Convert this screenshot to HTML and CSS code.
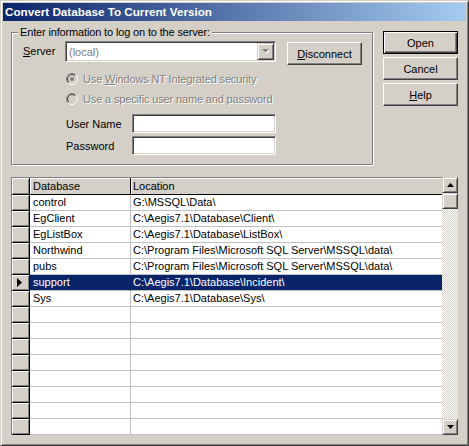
FILE: index.html
```html
<!DOCTYPE html>
<html>
<head>
<meta charset="utf-8">
<link rel="stylesheet" href="styles.css">
</head>
<body>
<div class="window">
  <div class="titlebar">Convert Database To Current Version</div>
  <div class="body">
    <div class="top">
      <fieldset class="group">
        <legend>Enter information to log on to the server:</legend>
        <div class="row-server">
          <span class="lbl-server"><u>S</u>erver</span>
          <div class="combo">
            <span class="combo-text">(local)</span>
            <span class="combo-btn">
              <svg width="7" height="5" viewBox="0 0 7 5"><polygon points="1,1 8,1 4.5,4.5" fill="#fff"/><polygon points="0,0 7,0 3.5,3.5" fill="#808080"/></svg>
            </span>
          </div>
          <div class="btn btn-disconnect"><span><u>D</u>isconnect</span></div>
        </div>
        <div class="radio-row r1">
          <svg class="radio" width="12" height="12" viewBox="0 0 12 12">
            <defs>
              <linearGradient id="go" x1="0" y1="0" x2="1" y2="1"><stop offset="0.5" stop-color="#808080"/><stop offset="0.5" stop-color="#ffffff"/></linearGradient>
              <linearGradient id="gi" x1="0" y1="0" x2="1" y2="1"><stop offset="0.5" stop-color="#404040"/><stop offset="0.5" stop-color="#d4d0c8"/></linearGradient>
            </defs>
            <circle cx="6" cy="6" r="5.5" fill="none" stroke="url(#go)" stroke-width="1"/>
            <circle cx="6" cy="6" r="4.5" fill="#d4d0c8" stroke="url(#gi)" stroke-width="1"/>
            <circle cx="6" cy="6" r="2" fill="#808080"/>
          </svg>
          <span class="disabled">Use <u>W</u>indows NT Integrated security</span>
        </div>
        <div class="radio-row r2">
          <svg class="radio" width="12" height="12" viewBox="0 0 12 12">
            <circle cx="6" cy="6" r="5.5" fill="none" stroke="url(#go)" stroke-width="1"/>
            <circle cx="6" cy="6" r="4.5" fill="#d4d0c8" stroke="url(#gi)" stroke-width="1"/>
          </svg>
          <span class="disabled">Use a specific user name and password</span>
        </div>
        <div class="field-row f1">
          <span class="field-lbl">User Name</span>
          <div class="edit"></div>
        </div>
        <div class="field-row f2">
          <span class="field-lbl">Password</span>
          <div class="edit"></div>
        </div>
      </fieldset>
      <div class="btns">
        <div class="btn btn-default"><span>Open</span></div>
        <div class="btn"><span>Cancel</span></div>
        <div class="btn"><span><u>H</u>elp</span></div>
      </div>
    </div>
    <div class="grid">
      <div class="table">
        <div class="sel hdr"></div>
        <div class="hcell">Database</div>
        <div class="hcell loc">Location</div>

        <div class="sel"></div><div class="cell db">control</div><div class="cell loc">G:\MSSQL\Data\</div>
        <div class="sel"></div><div class="cell db">EgClient</div><div class="cell loc">C:\Aegis7.1\Database\Client\</div>
        <div class="sel"></div><div class="cell db">EgListBox</div><div class="cell loc">C:\Aegis7.1\Database\ListBox\</div>
        <div class="sel"></div><div class="cell db">Northwind</div><div class="cell loc">C:\Program Files\Microsoft SQL Server\MSSQL\data\</div>
        <div class="sel"></div><div class="cell db">pubs</div><div class="cell loc">C:\Program Files\Microsoft SQL Server\MSSQL\data\</div>
        <div class="sel cur"><svg width="6" height="9" viewBox="0 0 6 9"><polygon points="0,0 5,4.5 0,9" fill="#000"/></svg></div><div class="cell db selrow">support</div><div class="cell loc selrow">C:\Aegis7.1\Database\Incident\</div>
        <div class="sel"></div><div class="cell db">Sys</div><div class="cell loc">C:\Aegis7.1\Database\Sys\</div>

        <div class="sel"></div><div class="cell db"></div><div class="cell loc"></div>
        <div class="sel"></div><div class="cell db"></div><div class="cell loc"></div>
        <div class="sel"></div><div class="cell db"></div><div class="cell loc"></div>
        <div class="sel"></div><div class="cell db"></div><div class="cell loc"></div>
        <div class="sel"></div><div class="cell db"></div><div class="cell loc"></div>
        <div class="sel"></div><div class="cell db"></div><div class="cell loc"></div>
        <div class="sel"></div><div class="cell db"></div><div class="cell loc"></div>
        <div class="sel"></div><div class="cell db"></div><div class="cell loc"></div>
      </div>
      <div class="vscroll">
        <div class="sbtn"><svg width="7" height="4" viewBox="0 0 7 4"><polygon points="3.5,0 7,4 0,4" fill="#000"/></svg></div>
        <div class="sbtn thumb"></div>
        <div class="track"></div>
        <div class="sbtn"><svg width="7" height="4" viewBox="0 0 7 4"><polygon points="0,0 7,0 3.5,4" fill="#000"/></svg></div>
      </div>
    </div>
  </div>
</div>
</body>
</html>
```
FILE: styles.css
```css
html, body {
  margin: 0;
  padding: 0;
  background: #d4d0c8;
}
body {
  font-family: "Liberation Sans", Arial, sans-serif;
  font-size: 11px;
  color: #000;
}
.window {
  width: 469px;
  height: 446px;
  box-sizing: border-box;
  background: #d4d0c8;
  border: 1px solid;
  border-color: #d4d0c8 #404040 #404040 #d4d0c8;
  box-shadow: inset 1px 1px #fff, inset -1px -1px #808080;
  padding: 2px;
  overflow: hidden;
}
.titlebar {
  height: 18px;
  line-height: 18px;
  padding-left: 2px;
  background: linear-gradient(to right, #0a246a, #a6caf0);
  color: #fff;
  font-weight: bold;
  font-size: 11.7px;
  white-space: nowrap;
}
.body {
  padding-left: 8px;
}
.top {
  display: flex;
  align-items: flex-start;
  margin-top: 5px;
}
.group {
  width: 362px;
  box-sizing: border-box;
  margin: 0;
  padding: 2px 0 9px 0;
  border: 1px solid #808080;
  box-shadow: inset 1px 1px #fff, 1px 1px #fff;
  min-width: 0;
}
.group legend {
  margin-left: 6px;
  padding: 0 2px;
  line-height: 13px;
  background: #d4d0c8;
  letter-spacing: -0.15px;
}
.row-server {
  display: flex;
  align-items: flex-start;
  padding-left: 11px;
  height: 23px;
}
.lbl-server {
  width: 42px;
  line-height: 21px;
}
.combo {
  width: 211px;
  height: 21px;
  box-sizing: border-box;
  border: 1px solid;
  border-color: #808080 #fff #fff #808080;
  box-shadow: inset 1px 1px #404040, inset -1px -1px #d4d0c8;
  background: #fff;
  display: flex;
  align-items: center;
  padding: 1px;
}
.combo-text {
  flex: 1;
  color: #808080;
  padding-left: 2px;
}
.combo-btn {
  width: 17px;
  height: 17px;
  box-sizing: border-box;
  border: 1px solid;
  border-color: #d4d0c8 #404040 #404040 #d4d0c8;
  box-shadow: inset 1px 1px #fff, inset -1px -1px #808080;
  background: #d4d0c8;
  display: flex;
  align-items: center;
  justify-content: center;
}
.btn {
  width: 75px;
  height: 23px;
  box-sizing: border-box;
  border: 1px solid;
  border-color: #fff #404040 #404040 #fff;
  box-shadow: inset -1px -1px #808080;
  background: #d4d0c8;
  display: flex;
  align-items: center;
  justify-content: center;
  font-size: 11px;
}
.btn-disconnect {
  margin-left: 11px;
  margin-top: 1px;
}
.btn-default {
  border: 1px solid #000;
  box-shadow: inset 1px 1px #fff, inset -1px -1px #404040, inset -2px -2px #808080;
}
.btns {
  margin-left: 10px;
  margin-top: 5px;
  display: flex;
  flex-direction: column;
  gap: 3px;
}
.radio-row {
  display: flex;
  align-items: center;
  height: 14px;
  padding-left: 54px;
}
.radio-row.r1 { margin-top: 8px; }
.radio-row.r2 { margin-top: 6px; }
.radio {
  margin-right: 5px;
  flex: none;
}
.disabled {
  color: #808080;
  text-shadow: 1px 1px 0 #fff;
  letter-spacing: -0.15px;
}
.field-row {
  display: flex;
  align-items: center;
  padding-left: 54px;
  height: 19px;
}
.field-row.f1 { margin-top: 8px; }
.field-row.f2 { margin-top: 3px; }
.field-lbl {
  width: 66px;
}
.edit {
  width: 144px;
  height: 19px;
  box-sizing: border-box;
  border: 1px solid;
  border-color: #808080 #fff #fff #808080;
  box-shadow: inset 1px 1px #404040, inset -1px -1px #d4d0c8;
  background: #fff;
}
.grid {
  margin-top: 12px;
  width: 447px;
  display: flex;
  border-left: 1px solid #808080;
}
.table {
  width: 430px;
  border-top: 1px solid #808080;
  display: grid;
  grid-template-columns: 18px 101px 311px;
  grid-template-rows: 17px repeat(15, 16px);
  background: #fff;
}
.sel {
  background: #d4d0c8;
  box-sizing: border-box;
  border-right: 1px solid #000;
  border-bottom: 1px solid #000;
  box-shadow: inset 1px 1px #fff, inset -1px -1px #808080;
  display: flex;
  align-items: center;
  padding-left: 5px;
}
.hcell {
  background: #d4d0c8;
  box-sizing: border-box;
  border-right: 1px solid #000;
  border-bottom: 1px solid #000;
  box-shadow: inset 1px 1px #fff;
  padding-left: 3px;
  line-height: 16px;
  white-space: nowrap;
}
.hcell.loc {
  padding-left: 2px;
  border-right: none;
}
.cell {
  box-sizing: border-box;
  border-bottom: 1px solid #c0c0c0;
  line-height: 15px;
  white-space: nowrap;
  overflow: hidden;
  padding-left: 3px;
}
.cell.db {
  border-right: 1px solid #c0c0c0;
}
.cell.loc {
  padding-left: 2px;
}
.cell.selrow {
  background: #0a246a;
  color: #fff;
}
.cell.db.selrow {
  border-right-color: #0a246a;
}
.vscroll {
  width: 16px;
  display: flex;
  flex-direction: column;
}
.sbtn {
  height: 16px;
  box-sizing: border-box;
  border: 1px solid;
  border-color: #d4d0c8 #404040 #404040 #d4d0c8;
  box-shadow: inset 1px 1px #fff, inset -1px -1px #808080;
  background: #d4d0c8;
  display: flex;
  align-items: center;
  justify-content: center;
  flex: none;
}
.track {
  flex: 1;
  background-color: #fff;
  background-image: conic-gradient(#d4d0c8 25%, #fff 0 50%, #d4d0c8 0 75%, #fff 0);
  background-size: 2px 2px;
}
```
